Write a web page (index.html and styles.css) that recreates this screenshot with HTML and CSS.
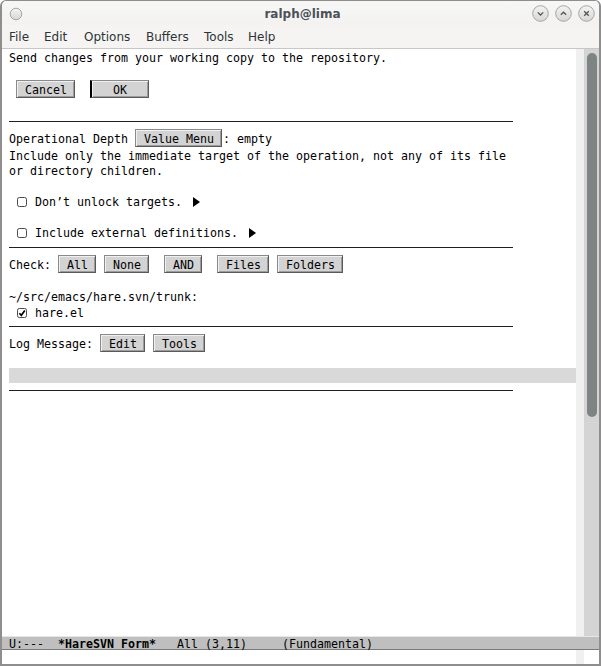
FILE: index.html
```html
<!DOCTYPE html>
<html>
<head>
<meta charset="utf-8">
<title>ralph@lima</title>
<link rel="stylesheet" href="styles.css">
</head>
<body>
<div class="window">
  <header class="titlebar">
    <div class="tb-left">
      <svg class="tb-dot" width="14" height="14" viewBox="0 0 14 14">
        <defs>
          <linearGradient id="bg" x1="0" y1="0" x2="0" y2="1">
            <stop offset="0" stop-color="#f4f4f4"/>
            <stop offset="1" stop-color="#d6d6d6"/>
          </linearGradient>
        </defs>
        <circle cx="7" cy="7" r="5.8" fill="url(#bg)" stroke="#a6a6a6" stroke-width="1"/>
      </svg>
    </div>
    <div class="title">ralph@lima</div>
    <div class="tb-buttons">
      <svg width="17" height="17" viewBox="0 0 17 17"><circle cx="8.5" cy="8.5" r="7.8" fill="url(#bg)" stroke="#a4a4a4"/><path d="M5.8 7.4 L8.5 10 L11.2 7.4" fill="none" stroke="#555" stroke-width="1.3"/></svg>
      <svg width="17" height="17" viewBox="0 0 17 17"><circle cx="8.5" cy="8.5" r="7.8" fill="url(#bg)" stroke="#a4a4a4"/><path d="M5.8 9.8 L8.5 7.2 L11.2 9.8" fill="none" stroke="#555" stroke-width="1.3"/></svg>
      <svg width="17" height="17" viewBox="0 0 17 17"><circle cx="8.5" cy="8.5" r="7.8" fill="url(#bg)" stroke="#a4a4a4"/><path d="M6.2 6.2 L10.8 10.8 M10.8 6.2 L6.2 10.8" fill="none" stroke="#555" stroke-width="1.3"/></svg>
    </div>
  </header>
  <nav class="menubar">
    <span class="mi m-file">File</span><span class="mi m-edit">Edit</span><span class="mi m-options">Options</span><span class="mi m-buffers">Buffers</span><span class="mi m-tools">Tools</span><span class="mi">Help</span>
  </nav>
  <div class="frame">
    <div class="buffer">
      <div class="ln">Send changes from your working copy to the repository.</div>
      <div class="ln"></div>
      <div class="ln bl"> <span class="btn">Cancel</span>  <span class="btn point">  OK  </span></div>
      <div class="ln"></div>
      <div class="rule"></div>
      <div class="ln bl">Operational Depth <span class="btn">Value Menu</span>: empty</div>
      <div class="ln">Include only the immediate target of the operation, not any of its file</div>
      <div class="ln">or directory children.</div>
      <div class="ln"></div>
      <div class="ln cl"> <svg class="cb" width="12" height="12" viewBox="0 0 12 12"><rect x="1.5" y="1.5" width="9" height="9" rx="1.8" fill="#fff" stroke="#4a4a4a"/></svg> Don’t unlock targets.<svg class="tri" width="7" height="10" viewBox="0 0 7 10"><polygon points="0,0 7,5 0,10" fill="#000"/></svg></div>
      <div class="ln"></div>
      <div class="ln cl"> <svg class="cb" width="12" height="12" viewBox="0 0 12 12"><rect x="1.5" y="1.5" width="9" height="9" rx="1.8" fill="#fff" stroke="#4a4a4a"/></svg> Include external definitions.<svg class="tri" width="7" height="10" viewBox="0 0 7 10"><polygon points="0,0 7,5 0,10" fill="#000"/></svg></div>
      <div class="rule"></div>
      <div class="ln bl">Check: <span class="btn">All</span> <span class="btn">None</span>  <span class="btn">AND</span>  <span class="btn">Files</span> <span class="btn">Folders</span></div>
      <div class="ln"></div>
      <div class="ln">~/src/emacs/hare.svn/trunk:</div>
      <div class="ln cl cl-short"> <svg class="cb" width="12" height="12" viewBox="0 0 12 12"><rect x="1.5" y="1.5" width="9" height="9" rx="1.8" fill="#fff" stroke="#4a4a4a"/><path d="M3.4 6.2 L5.3 8.3 L8.8 3.6" fill="none" stroke="#000" stroke-width="1.7"/></svg> hare.el</div>
      <div class="rule"></div>
      <div class="ln bl">Log Message: <span class="btn">Edit</span> <span class="btn">Tools</span></div>
      <div class="ln"></div>
      <div class="ln hl"></div>
      <div class="rule"></div>
    </div>
    <div class="fringe"></div>
    <div class="scrollbar"><div class="thumb"></div></div>
  </div>
  <div class="modeline">U:---  <b>*HareSVN Form*</b>   All (3,11)     (Fundamental)</div>
  <div class="echo"><div class="echo-text"></div><div class="fringe"></div><div class="echo-end"></div></div>
</div>
</body>
</html>
```

FILE: styles.css
```css
* { box-sizing: border-box; }
html, body { margin: 0; padding: 0; background: #ffffff; }
body { width: 601px; height: 666px; overflow: hidden; }

.window {
  width: 601px;
  height: 666px;
  display: flex;
  flex-direction: column;
  border: 2px solid #8e8e8e;
  border-top-width: 1px;
  border-radius: 6px 6px 0 0;
  background: #f5f4f3;
  overflow: hidden;
}

.titlebar {
  height: 24px;
  flex: none;
  display: grid;
  grid-template-columns: 1fr auto 1fr;
  align-items: center;
  background: linear-gradient(#f7f7f6, #f3f2f1);
}
.tb-left { display: flex; align-items: center; padding-left: 7px; padding-top: 1px; }
.tb-dot { display: block; }
.title {
  font-family: "DejaVu Sans", sans-serif;
  font-weight: bold;
  font-size: 12px;
  color: #4b5157;
  padding-left: 4px;
  padding-top: 1px;
}
.tb-buttons {
  display: flex;
  justify-content: flex-end;
  gap: 6px;
  padding-right: 4px;
  padding-top: 1px;
}
.tb-buttons svg { display: block; }

.menubar {
  height: 24px;
  flex: none;
  display: flex;
  align-items: center;
  padding-left: 7px;
  padding-top: 1px;
  border-bottom: 1px solid #c9c7c5;
  font-family: "DejaVu Sans", sans-serif;
  font-size: 12px;
  color: #2e3436;
}
.mi { flex: none; }
.m-file { width: 35px; }
.m-edit { width: 40px; }
.m-options { width: 62px; }
.m-buffers { width: 58px; }
.m-tools { width: 44px; }

.frame {
  flex: 1;
  display: flex;
  background: #ffffff;
}
.buffer {
  flex: 1;
  padding-top: 1px;
  padding-left: 7px;
  font-family: "DejaVu Sans Mono", monospace;
  font-size: 11.63px;
  color: #000;
}
.ln { height: 15px; line-height: 15px; padding-top: 1px; white-space: pre; }
.bl { height: 19px; line-height: 20px; padding-top: 0; }
.cl { height: 16px; line-height: 16px; }
.cl-short { height: 15px; }
.hl { background: #d9d9d9; }

.btn {
  display: inline-block;
  vertical-align: top;
  height: 18px;
  line-height: 16px;
  padding: 1px 7px 0 8px;
  margin-right: 1px;
  background: #d3d3d3;
  border: 1px solid #8a8a8a;
  border-right-color: #5a5a5a;
  border-bottom-color: #5a5a5a;
  box-shadow: inset 1px 1px 0 #f0f0f0, inset -1px -1px 0 #9c9c9c;
}
.btn.point { border-left: 2px solid #000; padding-left: 7px; }

.cb { vertical-align: -2px; }
.tri { vertical-align: -1px; margin-left: 11px; }

.rule {
  width: 504px;
  height: 8px;
  margin-bottom: 7px;
  border-bottom: 1px solid #1f1f1f;
}

.fringe { width: 8px; flex: none; background: #f0f0f0; }
.scrollbar {
  width: 15px;
  flex: none;
  background: #d4d4d4;
  padding: 4px 2px 0 3px;
}
.thumb {
  width: 10px;
  height: 364px;
  border-radius: 5px;
  background: #7e8383;
}

.modeline {
  height: 14px;
  flex: none;
  background: #bfbfbf;
  border-top: 1px solid #e6e6e6;
  border-bottom: 1px solid #7a7a7a;
  padding-left: 7px;
  padding-top: 1px;
  font-family: "DejaVu Sans Mono", monospace;
  font-size: 11.63px;
  line-height: 12px;
  color: #000;
  white-space: pre;
}

.echo {
  height: 14px;
  flex: none;
  display: flex;
  background: #fff;
}
.echo-text { flex: 1; }
.echo-end { width: 15px; flex: none; }
```
